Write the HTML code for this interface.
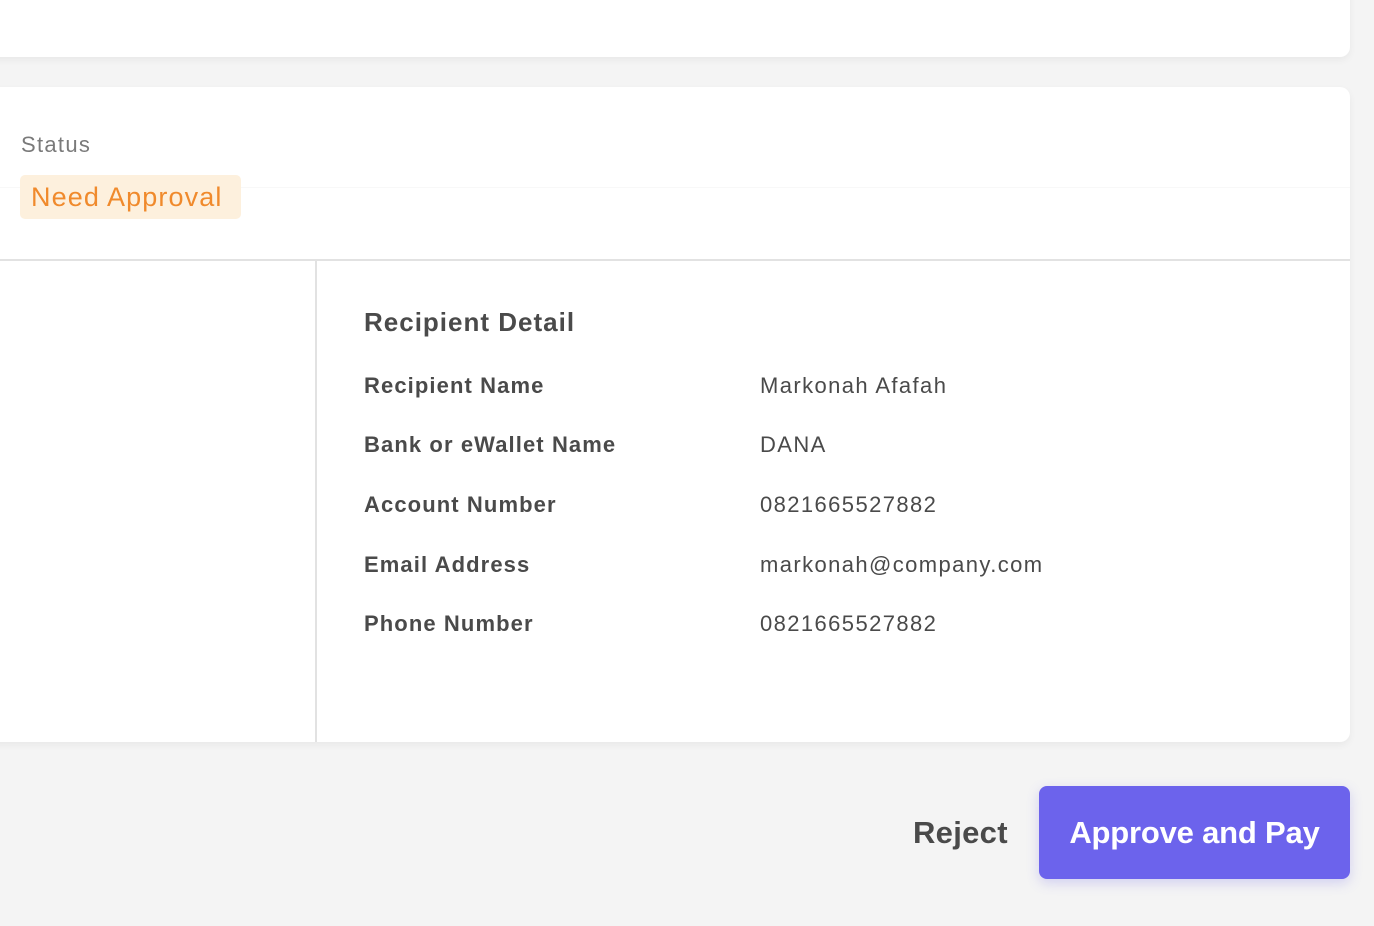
<!DOCTYPE html>
<html><head><style>
body{margin:0;width:1374px;height:926px;background:#f4f4f4;font-family:"Liberation Sans",sans-serif;position:relative;overflow:hidden}
.a{position:absolute}
.card{background:#fff;border-radius:10px;box-shadow:0 3px 8px rgba(0,0,0,0.05)}
.lbl{position:absolute;left:364px;font-weight:bold;font-size:22px;color:#4a4a4a;letter-spacing:1.1px}
.val{position:absolute;left:760px;font-size:22px;color:#4a4a4a;letter-spacing:1.4px}
</style></head><body>
<div class="a card" style="left:-20px;top:-20px;width:1370px;height:77px"></div>
<div class="a card" style="left:-20px;top:87px;width:1370px;height:655px"></div>
<div class="a" style="left:0;top:187px;width:1350px;height:1px;background:#f8f8f8"></div>
<div class="a" style="left:0;top:259px;width:1350px;height:2px;background:#e2e2e2"></div>
<div class="a" style="left:315px;top:261px;width:2px;height:481px;background:#e2e2e2"></div>
<div class="a" style="left:21px;top:132px;font-size:22px;color:#7a7a7a;letter-spacing:1.3px">Status</div>
<div class="a" style="left:20px;top:175px;width:221px;height:44px;background:#fdf0dd;border-radius:5px"></div>
<div class="a" style="left:31px;top:182px;font-size:27px;color:#f08a2c;letter-spacing:1.1px">Need Approval</div>
<div class="a" style="left:364px;top:307px;font-size:26px;font-weight:bold;color:#4a4a4a;letter-spacing:1px">Recipient Detail</div>
<div class="lbl" style="top:373px">Recipient Name</div><div class="val" style="top:373px">Markonah Afafah</div>
<div class="lbl" style="top:432px">Bank or eWallet Name</div><div class="val" style="top:432px">DANA</div>
<div class="lbl" style="top:492px">Account Number</div><div class="val" style="top:492px">0821665527882</div>
<div class="lbl" style="top:552px">Email Address</div><div class="val" style="top:552px">markonah@company.com</div>
<div class="lbl" style="top:611px">Phone Number</div><div class="val" style="top:611px">0821665527882</div>
<div class="a" style="left:913px;top:815px;font-size:31px;font-weight:bold;color:#4a4a4a;letter-spacing:0.3px">Reject</div>
<div class="a" style="left:1039px;top:786px;width:311px;height:93px;background:#6c63ec;border-radius:8px;box-shadow:0 4px 12px rgba(108,99,236,0.25);color:#fff;font-size:31px;font-weight:bold;text-align:center;line-height:93px;letter-spacing:-0.2px">Approve and Pay</div>
</body></html>
